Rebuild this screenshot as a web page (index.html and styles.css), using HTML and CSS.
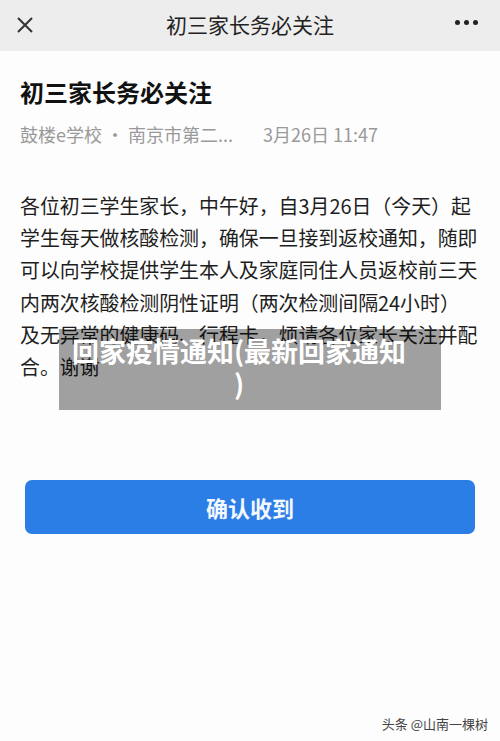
FILE: index.html
```html
<!DOCTYPE html>
<html lang="zh-CN">
<head>
    <meta charset="UTF-8">
    <meta name="viewport" content="width=device-width, initial-scale=1.0">
    <title>初三家长务必关注</title>
    <link rel="stylesheet" href="styles.css">
</head>
<body>

<div class="topbar">
    <svg class="close-icon" width="18" height="18" viewBox="0 0 18 18">
        <path d="M2 2 L16 16 M16 2 L2 16" stroke="#333" stroke-width="2" fill="none"/>
    </svg>
    <div class="topbar-title">初三家长务必关注</div>
    <div class="more-dots"><span></span><span></span><span></span></div>
</div>

<div class="article">
    <h1>初三家长务必关注</h1>
    <div class="meta">
        <span class="source">鼓楼e学校 • 南京市第二...</span>
        <span class="time">3月26日 11:47</span>
    </div>

    <div class="body-wrap">
        <p class="content">各位初三学生家长，中午好，自3月26日（今天）起<br>学生每天做核酸检测，确保一旦接到返校通知，随即<br>可以向学校提供学生本人及家庭同住人员返校前三天<br>内两次核酸检测阴性证明（两次检测间隔24小时）<br>及无异常的健康码、行程卡，烦请各位家长关注并配<br>合。谢谢</p>
        <div class="caption">回家疫情通知(最新回家通知<br>)</div>
    </div>

    <button class="confirm">确认收到</button>
</div>

<div class="watermark">头条 @山南一棵树</div>

</body>
</html>
```

FILE: styles.css
```css
body {
    margin: 0;
    width: 500px;
    height: 741px;
    background: #fdfdfd;
    font-family: "Noto Sans CJK SC", "Noto Sans", sans-serif;
    color: #1a1a1a;
    display: flex;
    flex-direction: column;
    overflow: hidden;
}
.topbar {
    height: 51px;
    background: #ededed;
    display: flex;
    align-items: center;
    justify-content: space-between;
    padding: 0 22px 0 16px;
    position: relative;
}
.close-icon {
    display: block;
    margin-top: -2px;
}
.topbar-title {
    position: absolute;
    left: 0;
    right: 0;
    text-align: center;
    font-size: 21px;
    color: #222;
    margin-top: -4px;
    pointer-events: none;
}
.more-dots {
    display: flex;
    gap: 4px;
    margin-top: -6px;
}
.more-dots span {
    width: 5px;
    height: 5px;
    border-radius: 50%;
    background: #222;
}
.article {
    padding: 0 0 0 20px;
    flex: 1;
}
h1 {
    margin: 24px 0 0;
    font-size: 24px;
    font-weight: 700;
    line-height: 34px;
    color: #111;
}
.meta {
    margin-top: 12px;
    font-size: 18px;
    color: #999;
    display: flex;
    gap: 30px;
}
.body-wrap {
    position: relative;
    margin-top: 43px;
}
.content {
    margin: 0;
    font-size: 19.9px;
    line-height: 32.2px;
    color: #1e1e1e;
    white-space: nowrap;
}
.caption {
    position: absolute;
    left: 39px;
    width: 382px;
    top: 139px;
    height: 81px;
    box-sizing: border-box;
    padding: 5px 34px 0 12px;
    background: rgba(0, 0, 0, 0.37);
    color: #fff;
    font-size: 27px;
    font-weight: 700;
    line-height: 33px;
    text-align: center;
    white-space: nowrap;
}
.confirm {
    display: block;
    margin: 97px 0 0 5px;
    width: 450px;
    height: 54px;
    border: none;
    border-radius: 7px;
    background: #2b7ee6;
    color: #f4f8ff;
    font-family: inherit;
    font-size: 22px;
    font-weight: 700;
}
.watermark {
    position: absolute;
    right: 12px;
    bottom: 8px;
    font-size: 13px;
    color: #444;
}
```
